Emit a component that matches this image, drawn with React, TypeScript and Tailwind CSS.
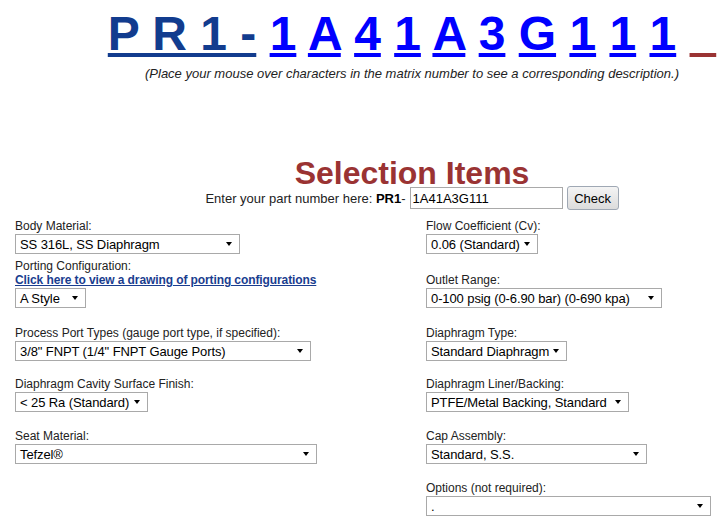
import type { ReactNode } from 'react';

type Field = { label: string; value: string; w: string };

const rows: { mt: string; left: Field | 'porting' | null; right: Field }[] = [
  {
    mt: 'mt-0',
    left: { label: 'Body Material:', value: 'SS 316L, SS Diaphragm', w: 'w-[225px]' },
    right: { label: 'Flow Coefficient (Cv):', value: '0.06 (Standard)', w: 'w-[112px]' },
  },
  {
    mt: 'mt-[5px]',
    left: 'porting',
    right: { label: 'Outlet Range:', value: '0-100 psig (0-6.90 bar) (0-690 kpa)', w: 'w-[236px]' },
  },
  {
    mt: 'mt-[18px]',
    left: {
      label: 'Process Port Types (gauge port type, if specified):',
      value: '3/8" FNPT (1/4" FNPT Gauge Ports)',
      w: 'w-[296px]',
    },
    right: { label: 'Diaphragm Type:', value: 'Standard Diaphragm', w: 'w-[141px]' },
  },
  {
    mt: 'mt-4',
    left: { label: 'Diaphragm Cavity Surface Finish:', value: '< 25 Ra (Standard)', w: 'w-[133px]' },
    right: { label: 'Diaphragm Liner/Backing:', value: 'PTFE/Metal Backing, Standard', w: 'w-[203px]' },
  },
  {
    mt: 'mt-[17px]',
    left: { label: 'Seat Material:', value: 'Tefzel®', w: 'w-[302px]' },
    right: { label: 'Cap Assembly:', value: 'Standard, S.S.', w: 'w-[221px]' },
  },
  {
    mt: 'mt-[17px]',
    left: null,
    right: { label: 'Options (not required):', value: '.', w: 'w-[285px]' },
  },
];

const matrix = ['1', 'A', '4', '1', 'A', '3', 'G', '1', '1', '1'];

function Dropdown({ value, w }: { value: string; w: string }) {
  return (
    <div
      className={`mt-px flex h-[20px] items-center justify-between border border-[#a9a9a9] bg-white pl-[4px] pr-[7px] text-[13px] leading-[15px] text-black ${w}`}
    >
      <span className="whitespace-nowrap tracking-[-0.1px]">{value}</span>
      <svg width="6" height="4" viewBox="0 0 6 4" className="ml-[3px] shrink-0">
        <path d="M0 0h6L3 4z" fill="#000" />
      </svg>
    </div>
  );
}

function Label({ children }: { children: ReactNode }) {
  return <div className="whitespace-nowrap text-[12px] leading-[14px] text-[#222]">{children}</div>;
}

function FieldCell({ f }: { f: Field }) {
  return (
    <div>
      <Label>{f.label}</Label>
      <Dropdown value={f.value} w={f.w} />
    </div>
  );
}

export default function App() {
  return (
    <div className="h-[525px] w-[727px] overflow-hidden bg-white font-['Liberation_Sans',Arial,sans-serif] text-[#222]">
      {/* part number matrix, centred on the right-shifted content column */}
      <div className="pl-[97px] text-center">
        <div className="whitespace-nowrap pt-[7px] text-[48px] font-bold leading-[54px]">
          <a className="text-[#123c8e] underline">P R 1 -</a>{' '}
          {matrix.map((c, i) => (
            <span key={i}>
              <a className="text-[#0000ff] underline">{c}</a>{' '}
            </span>
          ))}
          <span className="text-[#9a3333] underline">{'\u00a0\u00a0'}</span>
        </div>
        <p className="mt-[5px] text-[13px] italic leading-[15px] text-[#222]">
          (Place your mouse over characters in the matrix number to see a corresponding description.)
        </p>

        <h2 className="mt-[80px] text-[32px] font-bold leading-[25px] text-[#9a3333]">Selection Items</h2>
        <div className="flex h-[24px] items-center justify-center text-[13px] leading-[15px] text-[#222]">
          <span className="whitespace-pre">Enter your part number here: </span>
          <b className="text-black">PR1</b>
          <span>-</span>
          <input
            readOnly
            value="1A41A3G111"
            className="ml-[4px] h-[22px] w-[153px] border border-[#a9a9a9] pl-[2px] text-[13px] text-black outline-none"
          />
          <button className="ml-[4px] h-[24px] w-[52px] rounded-[3px] border border-[#9fa8b4] bg-gradient-to-b from-[#f4f4f4] to-[#dcdcdc] text-[13px] text-black">
            Check
          </button>
        </div>
      </div>

      <div className="mt-[9px] pl-[15px]">
        {rows.map((r, i) => (
          <div key={i} className={`grid grid-cols-[411px_1fr] items-end ${r.mt}`}>
            {r.left === 'porting' ? (
              <div>
                <Label>Porting Configuration:</Label>
                <a className="block whitespace-nowrap text-[12px] font-bold leading-[14px] tracking-[-0.1px] text-[#1a3d8f] underline">
                  Click here to view a drawing of porting configurations
                </a>
                <Dropdown value="A Style" w="w-[71px]" />
              </div>
            ) : r.left ? (
              <FieldCell f={r.left} />
            ) : (
              <div />
            )}
            <FieldCell f={r.right} />
          </div>
        ))}
      </div>
    </div>
  );
}
